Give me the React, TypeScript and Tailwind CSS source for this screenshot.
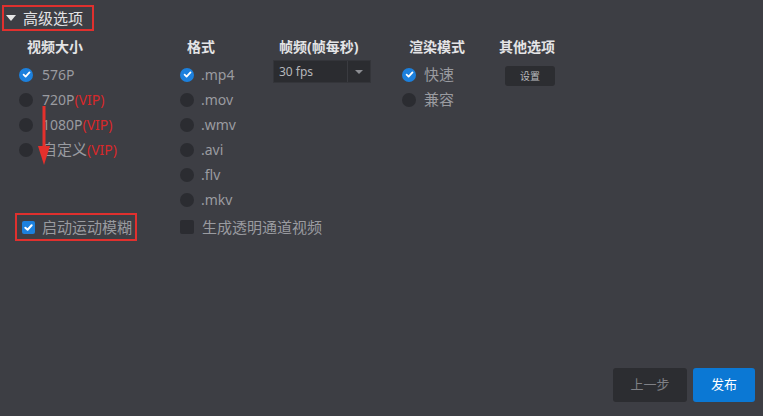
const font = { fontFamily: '"Noto Sans", "Noto Sans CJK SC", sans-serif' };

function Radio({ checked }: { checked?: boolean }) {
  return checked ? (
    <span className="w-[14px] h-[14px] rounded-full bg-[#1c80dd] flex items-center justify-center shrink-0">
      <svg width="9" height="9" viewBox="0 0 10 10">
        <path d="M1.8 5.2 L4 7.3 L8.3 2.6" fill="none" stroke="#fff" strokeWidth="2" strokeLinecap="round" strokeLinejoin="round" />
      </svg>
    </span>
  ) : (
    <span className="w-[14px] h-[14px] rounded-full bg-[#2b2c31] shrink-0" />
  );
}

function Option({ checked, label, gap, vip, cjk }: { checked?: boolean; label: string; gap: string; vip?: boolean; cjk?: boolean }) {
  return (
    <div className={`h-[25px] flex items-center ${gap}`}>
      <Radio checked={checked} />
      <span className={`${cjk ? "text-[15px]" : "text-[14px]"} text-[#9a9ba0] leading-none whitespace-nowrap`}>
        {label}
        {vip && <span className="text-[14px] text-[#d8282a]">(VIP)</span>}
      </span>
    </div>
  );
}

function Head({ children, cls }: { children: React.ReactNode; cls: string }) {
  return <div className={`h-[18px] leading-[18px] mb-[6px] text-[14px] font-bold text-[#e4e4e6] whitespace-nowrap ${cls}`}>{children}</div>;
}

export default function App() {
  return (
    <div className="relative w-[763px] h-[416px] bg-[#3d3e44] flex flex-col overflow-hidden" style={font}>
      <div className="mt-[5px] ml-[2px] w-[92px] h-[26px] border-2 border-[#e0302e] flex items-center">
        <svg width="10" height="6" viewBox="0 0 10 6" className="ml-[2px]">
          <path d="M0 0 L10 0 L5 6 Z" fill="#e6e6e6" />
        </svg>
        <span className="ml-[7px] text-[15px] text-[#e2e2e4] leading-none">高级选项</span>
      </div>

      <div className="flex pl-[19px] pt-[7px]">
        <div className="w-[161px]">
          <Head cls="pl-[8px]">视频大小</Head>
          <Option checked label="576P" gap="gap-[9px]" />
          <Option label="720P" vip gap="gap-[9px]" />
          <Option label="1080P" vip gap="gap-[9px]" />
          <Option label="自定义" vip cjk gap="gap-[9px]" />
          <div className="mt-[51px] ml-[-4px] w-[122px] h-[28px] border-2 border-[#e0302e] flex items-center pl-[5px] gap-[7px]">
            <span className="w-[13px] h-[13px] rounded-[2px] bg-[#1c80dd] flex items-center justify-center">
              <svg width="9" height="9" viewBox="0 0 10 10">
                <path d="M1.5 5.2 L4 7.5 L8.5 2.5" fill="none" stroke="#fff" strokeWidth="2.2" strokeLinecap="round" strokeLinejoin="round" />
              </svg>
            </span>
            <span className="text-[15px] text-[#9a9ba0] leading-none whitespace-nowrap">启动运动模糊</span>
          </div>
        </div>

        <div className="w-[93px]">
          <Head cls="pl-[7px]">格式</Head>
          <Option checked label=".mp4" gap="gap-[7px]" />
          <Option label=".mov" gap="gap-[7px]" />
          <Option label=".wmv" gap="gap-[7px]" />
          <Option label=".avi" gap="gap-[7px]" />
          <Option label=".flv" gap="gap-[7px]" />
          <Option label=".mkv" gap="gap-[7px]" />
          <div className="mt-[1px] h-[28px] flex items-center gap-[8px] whitespace-nowrap">
            <span className="w-[14px] h-[14px] rounded-[2px] bg-[#2b2c31] shrink-0" />
            <span className="text-[15px] text-[#9a9ba0] leading-none">生成透明通道视频</span>
          </div>
        </div>

        <div className="w-[129px]">
          <Head cls="pl-[6px]">帧频(帧每秒)</Head>
          <div className="w-[98px] h-[23px] mt-[-2px] bg-[#2b2c30] border border-[#34353a] flex items-center">
            <span className="flex-1 pl-[5px] text-[12px] text-[#b5b6ba] leading-none">30 fps</span>
            <span className="w-px h-[21px] bg-[#3a3b40]" />
            <span className="w-[22px] flex items-center justify-center">
              <svg width="8" height="4" viewBox="0 0 8 4">
                <path d="M0 0 L8 0 L4 4 Z" fill="#8c8d92" />
              </svg>
            </span>
          </div>
        </div>

        <div className="w-[103px]">
          <Head cls="pl-[7px]">渲染模式</Head>
          <Option checked label="快速" cjk gap="gap-[8px]" />
          <Option label="兼容" cjk gap="gap-[8px]" />
        </div>

        <div>
          <Head cls="ml-[-6px]">其他选项</Head>
          <button className="w-[50px] h-[20px] mt-[-2px] bg-[#2c2d31] rounded-[3px] text-[10px] text-[#b8b9bd] leading-none">
            设置
          </button>
        </div>
      </div>

      <div className="mt-auto flex justify-end gap-[6px] pr-[8px] pb-[14px]">
        <button className="w-[74px] h-[34px] rounded-[3px] bg-[#2c2d31] text-[13px] text-[#7f8085]">上一步</button>
        <button className="w-[62px] h-[34px] rounded-[3px] bg-[#0b78d4] text-[13px] text-white">发布</button>
      </div>

      <svg className="absolute left-[36px] top-[106px]" width="16" height="60" viewBox="0 0 16 60">
        <path d="M8 0 L8 42" stroke="#e5302c" strokeWidth="3" />
        <path d="M2 40 L14 40 L8 59 Z" fill="#e5302c" />
      </svg>
    </div>
  );
}
